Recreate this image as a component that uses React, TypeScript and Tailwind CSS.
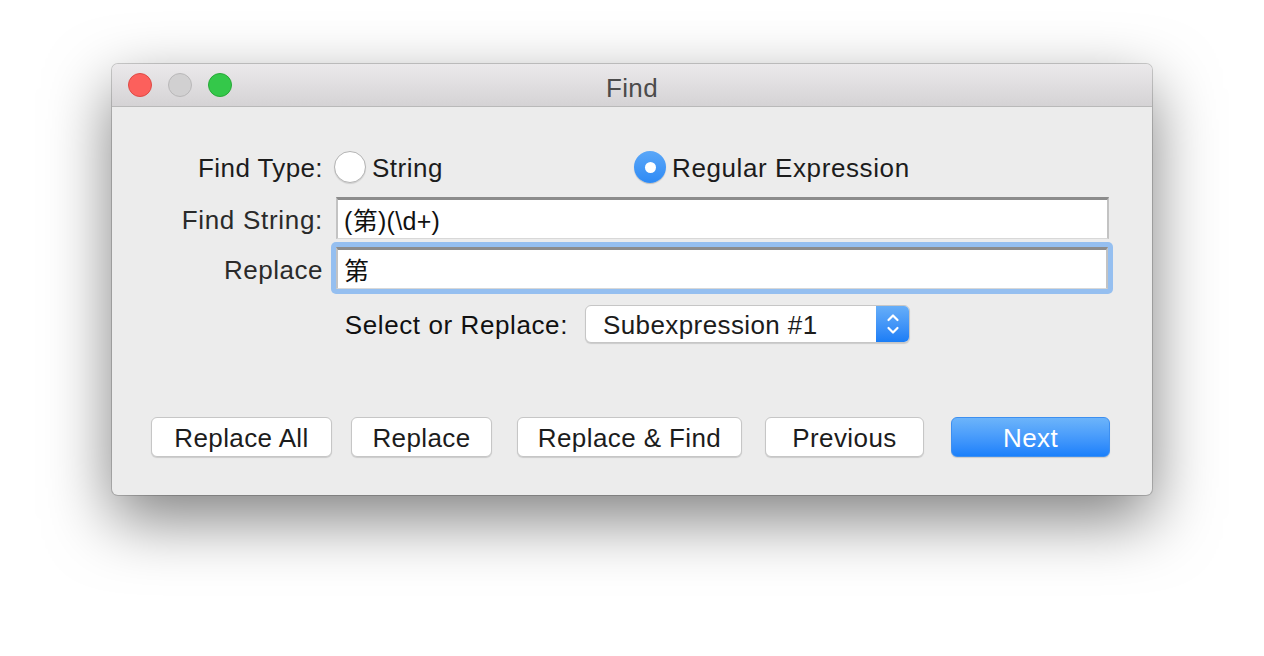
import React from 'react';

const FONT = { fontFamily: '"Liberation Sans", "Noto Sans CJK SC", sans-serif' };

function Radio({ checked }: { checked: boolean }) {
  if (checked) {
    return (
      <span className="flex items-center justify-center w-[32px] h-[32px] rounded-full bg-gradient-to-b from-[#5aa7f8] to-[#2d8af5] shadow-[0_1px_1px_rgba(0,0,0,0.2)] shrink-0">
        <span className="w-[11px] h-[11px] rounded-full bg-white" />
      </span>
    );
  }
  return (
    <span className="w-[32px] h-[32px] rounded-full bg-white border border-[#b4b4b4] shadow-[0_1px_1px_rgba(0,0,0,0.12)] shrink-0" />
  );
}

function PushButton({ label, className }: { label: string; className: string }) {
  return (
    <button
      className={`h-[40px] rounded-[6px] bg-white border border-[#c6c6c6] shadow-[0_1px_1px_rgba(0,0,0,0.14)] text-[26px] tracking-[0.4px] text-[#1c1c1c] flex items-center justify-center pt-[2px] ${className}`}
    >
      {label}
    </button>
  );
}

export default function App() {
  return (
    <div className="w-[1264px] h-[656px] bg-white pt-[64px] pl-[112px]" style={FONT}>
      <div className="w-[1040px] h-[431px] rounded-[6px] overflow-hidden bg-[#ececec] flex flex-col shadow-[0_24px_64px_rgba(0,0,0,0.5),0_0_0_1px_rgba(0,0,0,0.18)]">
        {/* Title bar */}
        <div className="relative h-[43px] shrink-0 bg-gradient-to-b from-[#ebe9eb] to-[#d5d3d5] border-b border-[#b9b9b9] flex items-center">
          <div className="flex items-center gap-[16px] pl-[16px]">
            <span className="w-[24px] h-[24px] rounded-full bg-[#fc605c] border border-[#de4a45]" />
            <span className="w-[24px] h-[24px] rounded-full bg-[#d1d0d1] border border-[#b9b8b9]" />
            <span className="w-[24px] h-[24px] rounded-full bg-[#34c84a] border border-[#28a937]" />
          </div>
          <span className="absolute left-0 right-0 top-[9px] text-center text-[26px] leading-[30px] text-[#4b4b4b] tracking-[0.3px]">Find</span>
        </div>

        {/* Body */}
        <div className="flex-1 flex flex-col pt-[40px] text-[#1c1c1c]">
          {/* Find Type */}
          <div className="flex items-center h-[40px]">
            <span className="w-[211px] text-right text-[26px] tracking-[0.4px] pt-[2px]">Find Type:</span>
            <div className="ml-[11px] w-[300px] flex items-center gap-[6px]">
              <Radio checked={false} />
              <span className="text-[26px] tracking-[0.5px] pt-[2px]">String</span>
            </div>
            <div className="flex items-center gap-[6px]">
              <Radio checked />
              <span className="text-[26px] tracking-[0.6px] pt-[2px]">Regular Expression</span>
            </div>
          </div>

          {/* Find String */}
          <div className="flex items-center h-[42px] mt-[10px]">
            <span className="w-[211px] text-right text-[26px] tracking-[0.7px] text-[#2a2a2a] pt-[4px]">Find String:</span>
            <div className="ml-[13px] w-[773px] h-[42px] bg-white border-t-[3px] border-t-[#8c8c8c] border-x-2 border-x-[#c3c3c3] border-b border-b-[#d8d8d8] flex items-center pl-[6px] pt-[5px]">
              <span className="text-[25px] tracking-[0.3px] text-[#111]">(第)(\d+)</span>
            </div>
          </div>

          {/* Replace */}
          <div className="flex items-center h-[52px] mt-[3px]">
            <span className="w-[211px] text-right text-[26px] tracking-[0.5px] text-[#2a2a2a] pt-[4px]">Replace</span>
            <div className="ml-[8px] w-[782px] h-[52px] rounded-[5px] bg-[#95bff0] p-[5px]">
              <div className="w-full h-full bg-white border-t-[3px] border-t-[#8c8c8c] border-x-2 border-x-[#c3c3c3] border-b border-b-[#d8d8d8] flex items-center pl-[6px] pt-[5px]">
                <span className="text-[25px] text-[#111]">第</span>
              </div>
            </div>
          </div>

          {/* Select or Replace */}
          <div className="flex items-center h-[38px] mt-[11px]">
            <span className="ml-[230px] w-[226px] text-right text-[26px] tracking-[0.6px] text-[#111] pt-[2px]">Select or Replace:</span>
            <div className="ml-[17px] w-[325px] h-[38px] rounded-[6px] bg-white border border-[#c6c6c6] shadow-[0_1px_1px_rgba(0,0,0,0.14)] flex items-center overflow-hidden">
              <span className="flex-1 pl-[17px] text-[26px] tracking-[0.4px] text-[#1c1c1c] pt-[2px]">Subexpression #1</span>
              <span className="w-[33px] h-full bg-gradient-to-b from-[#66aef8] to-[#1a7df6] flex items-center justify-center">
                <svg width="14" height="26" viewBox="0 0 14 26" fill="none" stroke="white" strokeWidth="2.2" strokeLinecap="round" strokeLinejoin="round">
                  <path d="M2.5 9 L7 4.5 L11.5 9" />
                  <path d="M2.5 17 L7 21.5 L11.5 17" />
                </svg>
              </span>
            </div>
          </div>

          {/* Buttons */}
          <div className="flex items-center mt-[74px]">
            <PushButton label="Replace All" className="ml-[39px] w-[181px]" />
            <PushButton label="Replace" className="ml-[19px] w-[141px]" />
            <PushButton label="Replace & Find" className="ml-[25px] w-[225px]" />
            <PushButton label="Previous" className="ml-[23px] w-[159px]" />
            <button className="ml-[27px] w-[159px] h-[40px] rounded-[6px] bg-gradient-to-b from-[#6cb4fa] to-[#1a80fb] border border-[#3d8ff0] shadow-[0_1px_1px_rgba(0,0,0,0.14)] text-[26px] tracking-[0.4px] text-white flex items-center justify-center pt-[2px]">
              Next
            </button>
          </div>
        </div>
      </div>
    </div>
  );
}
